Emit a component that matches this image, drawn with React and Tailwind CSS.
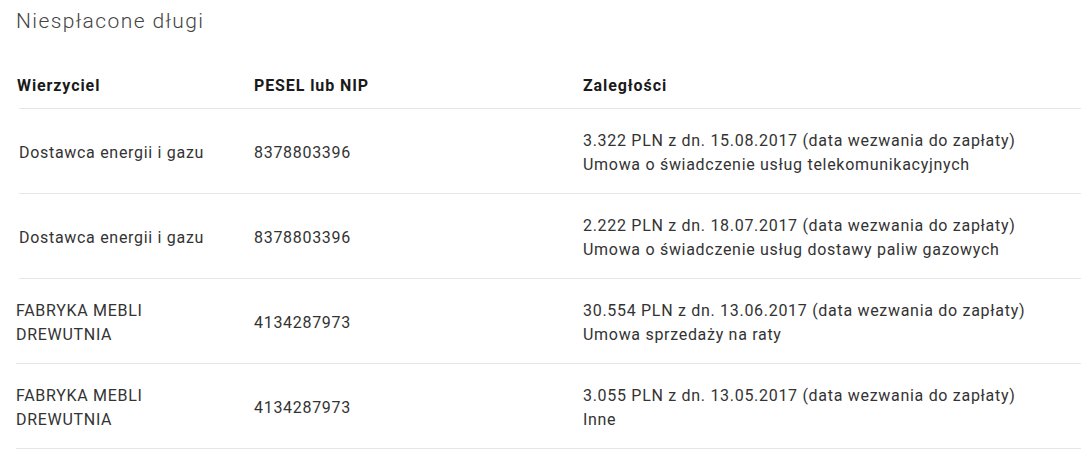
import React from 'react';

const rows = [
    {
        name: 'Dostawca energii i gazu',
        id: '8378803396',
        amount: '3.322 PLN z dn. 15.08.2017 (data wezwania do zapłaty)',
        kind: 'Umowa o świadczenie usług telekomunikacyjnych',
        shifted: true,
    },
    {
        name: 'Dostawca energii i gazu',
        id: '8378803396',
        amount: '2.222 PLN z dn. 18.07.2017 (data wezwania do zapłaty)',
        kind: 'Umowa o świadczenie usług dostawy paliw gazowych',
        shifted: true,
    },
    {
        name: 'FABRYKA MEBLI DREWUTNIA',
        id: '4134287973',
        amount: '30.554 PLN z dn. 13.06.2017 (data wezwania do zapłaty)',
        kind: 'Umowa sprzedaży na raty',
        shifted: false,
    },
    {
        name: 'FABRYKA MEBLI DREWUTNIA',
        id: '4134287973',
        amount: '3.055 PLN z dn. 13.05.2017 (data wezwania do zapłaty)',
        kind: 'Inne',
        shifted: false,
    },
];

const App = () => {
    return (
        <div className="w-[1081px] h-[457px] bg-white pl-[16px] font-['Roboto',sans-serif] text-[#333]">
            <h1 className="text-[21px] font-light tracking-[1.4px] text-[#444] leading-none pt-[11px]">Niespłacone długi</h1>

            <div className="mt-[38px]">
                <div className="ml-[3px] grid grid-cols-[235px_329px_1fr] h-[39px] border-b border-[#e6e6e6] text-[16px] leading-[24px] tracking-[0.9px] font-bold text-[#1a1a1a]">
                    <div className="pt-[4px] -ml-[2px]">Wierzyciel</div>
                    <div className="pt-[4px]">PESEL lub NIP</div>
                    <div className="pt-[4px]">Zaległości</div>
                </div>

                {rows.map((r, i) => (
                    <div
                        key={i}
                        className={
                            r.shifted
                                ? 'ml-[3px] grid grid-cols-[235px_329px_1fr] h-[85px] pt-[3px] items-center border-b border-[#e6e6e6] text-[16px] leading-[24px] tracking-[0.7px]'
                                : 'grid grid-cols-[238px_329px_1fr] h-[85px] pt-[3px] items-center border-b border-[#e6e6e6] text-[16px] leading-[24px] tracking-[0.7px]'
                        }
                    >
                        <div className="max-w-[200px]">{r.name}</div>
                        <div>{r.id}</div>
                        <div>
                            <div>{r.amount}</div>
                            <div>{r.kind}</div>
                        </div>
                    </div>
                ))}
            </div>
        </div>
    );
};

export default App;
